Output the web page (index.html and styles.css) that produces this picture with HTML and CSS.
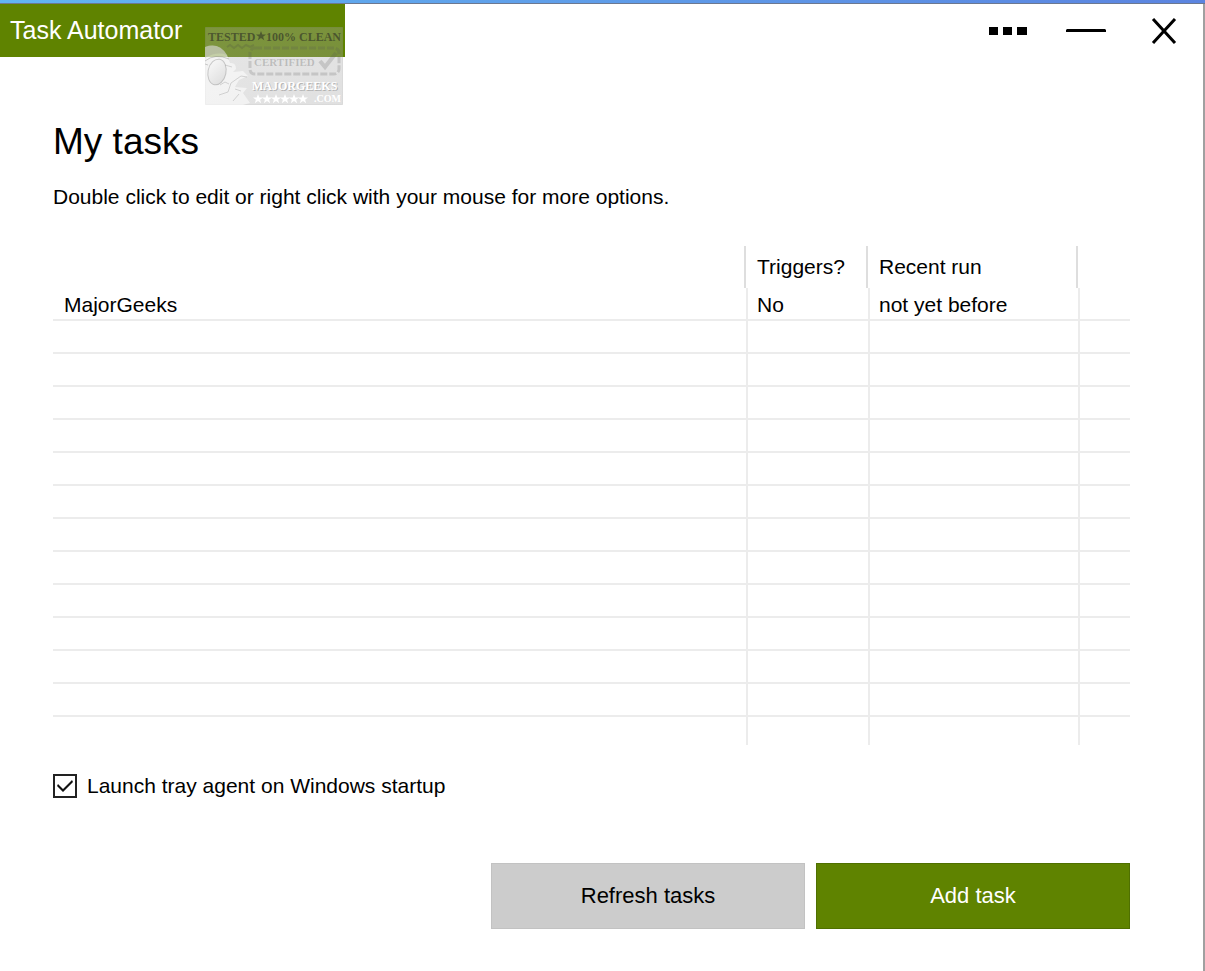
FILE: index.html
```html
<!DOCTYPE html>
<html lang="en">
<head>
  <meta charset="UTF-8" />
  <meta name="viewport" content="width=device-width, initial-scale=1.0"/>
  <title>Task Automator</title>
  <link rel="stylesheet" href="styles.css">
</head>
<body>
  <div class="window">
    <header class="titlebar">
      <div class="app-name">Task Automator
        <svg class="badge" viewBox="0 0 138 78" role="img" aria-label="MajorGeeks certified">
          <defs>
            <linearGradient id="badgeFill" x1="0" y1="0" x2="1" y2="1">
              <stop offset="0" stop-color="#b8b8b8" />
              <stop offset="1" stop-color="#a4a4a4" />
            </linearGradient>
            <linearGradient id="lens" x1="0" y1="0" x2="1" y2="1">
              <stop offset="0" stop-color="#fff" />
              <stop offset="1" stop-color="#ccc" />
            </linearGradient>
            <path id="star" d="M0 -5L1.300 -1.500H5L2.100 0.700L3.200 4.300L0 2.100L-3.200 4.300L-2.100 0.700L-5 -1.500H-1.300Z" />
          </defs>
          <rect x="0.5" y="0.5" width="137" height="77" fill="url(#badgeFill)" fill-opacity="0.34" stroke="#999" stroke-opacity="0.25" />
          <path d="M22 20L25 18L29 21L33 18L37 21L41 18L45 20L49 18" fill="none" stroke="#444" stroke-opacity="0.2" stroke-width="2" />
          <!-- geek: cap, goggles, nose, pointing hand -->
          <path d="M0 20Q14 15 22 28L25 36Q31 35 31 42L28 45L38 44L43 49L34 53L30 60L42 61L38 66L45 76L38 78H0Z" fill="#fff" fill-opacity="0.55" />
          <path d="M0 20Q14 15 22 28Q12 24 0 31Z" fill="#888" fill-opacity="0.22" />
          <path d="M0 34Q10 26 24 32M0 37L3 38" fill="none" stroke="#888" stroke-opacity="0.4" />
          <ellipse cx="12" cy="45" rx="9" ry="13" fill="url(#lens)" fill-opacity="0.6" stroke="#888" stroke-opacity="0.4" transform="rotate(12 12 45)" />
          <path d="M20 38L27 40M15 58L20 55L24 57M14 68L23 65L26 56L36 49L42 50M30 62L36 64M28 74L34 67" fill="none" stroke="#777" stroke-opacity="0.28" />
          <g fill="none" stroke="#555" stroke-opacity="0.2">
            <rect x="45" y="21" width="89" height="26" rx="5" stroke-width="3" stroke-dasharray="7 2" />
            <path d="M115 34L120 40L131 26" stroke-width="4" />
          </g>
          <use href="#star" x="56" y="9" fill="#222" fill-opacity="0.5" />
          <g fill="#fff">
            <use href="#star" x="53" y="72" />
            <use href="#star" x="62" y="72" />
            <use href="#star" x="71" y="72" />
            <use href="#star" x="80" y="72" />
            <use href="#star" x="89" y="72" />
            <use href="#star" x="98" y="72" />
          </g>
          <text class="badge-text" x="3" y="14" font-size="12" fill="#222" fill-opacity="0.55">TESTED</text>
          <text class="badge-text" x="61" y="14" font-size="12" fill="#222" fill-opacity="0.55">100% CLEAN</text>
          <text class="badge-text" x="49" y="39" font-size="11" fill="#444" fill-opacity="0.25">CERTIFIED</text>
          <text class="badge-text" x="48" y="64" font-size="12" fill="#666" fill-opacity="0.4">MAJORGEEKS</text>
          <text class="badge-text" x="47" y="63" font-size="12" fill="#fff">MAJORGEEKS</text>
          <text class="badge-text" x="109" y="75" font-size="10" fill="#fff">.COM</text>
        </svg>
      </div>
      <div class="window-buttons">
        <button type="button" aria-label="More">
          <svg width="38" height="8" viewBox="0 0 38 8"><path d="M0 0h9v8H0zM14 0h9v8h-9zM28 0h10v8H28z" /></svg>
        </button>
        <button type="button" aria-label="Minimize">
          <svg width="40" height="4" viewBox="0 0 40 4"><path d="M1 0h38l1 1v2H0V1z" /></svg>
        </button>
        <button type="button" aria-label="Close">
          <svg width="26" height="26" viewBox="0 0 26 26"><path d="M2 1L24 25M24 1L2 25" fill="none" stroke="#000" stroke-width="3" /></svg>
        </button>
      </div>
    </header>

    <main>
      <h1>My tasks</h1>
      <p>Double click to edit or right click with your mouse for more options.</p>

      <table class="tasks">
        <colgroup>
          <col>
          <col class="col-triggers">
          <col class="col-run">
          <col class="col-rest">
        </colgroup>
        <thead>
          <tr><th></th><th>Triggers?</th><th>Recent run</th><th></th></tr>
        </thead>
        <tbody>
          <tr><td>MajorGeeks</td><td>No</td><td>not yet before</td><td></td></tr>
          <tr><td></td><td></td><td></td><td></td></tr>
          <tr><td></td><td></td><td></td><td></td></tr>
          <tr><td></td><td></td><td></td><td></td></tr>
          <tr><td></td><td></td><td></td><td></td></tr>
          <tr><td></td><td></td><td></td><td></td></tr>
          <tr><td></td><td></td><td></td><td></td></tr>
          <tr><td></td><td></td><td></td><td></td></tr>
          <tr><td></td><td></td><td></td><td></td></tr>
          <tr><td></td><td></td><td></td><td></td></tr>
          <tr><td></td><td></td><td></td><td></td></tr>
          <tr><td></td><td></td><td></td><td></td></tr>
          <tr><td></td><td></td><td></td><td></td></tr>
          <tr><td></td><td></td><td></td><td></td></tr>
        </tbody>
      </table>

      <div class="startup">
        <input type="checkbox" id="startup" checked>
        <label for="startup">Launch tray agent on Windows startup</label>
      </div>

      <div class="actions">
        <button type="button">Refresh tasks</button>
        <button type="button" class="primary">Add task</button>
      </div>
    </main>
  </div>
</body>
</html>
```
FILE: styles.css
```css
* {
  box-sizing: border-box;
}

body {
  margin: 0;
  font-family: "Liberation Sans", Arial, sans-serif;
  font-size: 21px;
  color: #000;
  background: #fff;
}

.window {
  min-height: 100vh;
  border-right: 2px solid #a0a0a0;
}

.window::before {
  content: "";
  display: block;
  height: 3px;
  margin-right: -2px;
  border-bottom: 1px solid #6c7890;
  background: linear-gradient(to right, #62b5f2, #5b84e0);
}

.titlebar {
  display: flex;
  justify-content: space-between;
}

.app-name {
  position: relative;
  width: 345px;
  height: 53px;
  padding-left: 10px;
  background: #5f8300;
  color: #fff;
  font-size: 25px;
  line-height: 52px;
}

/* stamp hangs over the lower edge of the green tab */
.badge {
  position: absolute;
  top: 23px;
  right: 2px;
  width: 138px;
  height: 78px;
}

.badge-text {
  font-family: "Liberation Serif", serif;
  font-weight: bold;
}

.window-buttons {
  display: flex;
}

.window-buttons button {
  display: flex;
  align-items: center;
  justify-content: center;
  width: 78px;
  padding: 0;
  border: none;
  background: none;
}

main {
  padding: 63px 73px 40px 53px;
}

h1 {
  margin: 0 0 19px;
  font-size: 37px;
  font-weight: normal;
  line-height: 44px;
}

p {
  margin: 0 0 35px;
  line-height: 28px;
}

.tasks {
  width: 100%;
  table-layout: fixed;
  border-spacing: 0;
}

.col-triggers {
  width: 122px;
}

.col-run {
  width: 210px;
}

.col-rest {
  width: 52px;
}

.tasks th {
  height: 42px;
  padding: 0 0 0 11px;
  border-right: 2px solid #dedede;
  font-weight: normal;
  text-align: left;
}

.tasks th:last-child {
  border-right: none;
}

.tasks td {
  height: 33px;
  padding: 2px 0 0 9px;
  border-left: 2px solid #ececec;
  border-bottom: 2px solid #ececec;
  line-height: 28px;
}

.tasks td:first-child {
  padding-left: 11px;
  border-left: none;
}

.tasks tr:last-child td {
  height: 28px;
  border-bottom: none;
}

.startup {
  display: flex;
  align-items: center;
  gap: 10px;
  margin-top: 27px;
  line-height: 28px;
}

.startup input {
  appearance: none;
  width: 24px;
  height: 24px;
  margin: 0;
  border: 2px solid #222;
  background: #fff;
}

.startup input:checked::before {
  content: "";
  display: block;
  height: 20px;
  background: #111;
  clip-path: polygon(2px 10px, 3px 8px, 8px 13px, 17px 4px, 18px 6px, 8px 16px);
}

.actions {
  display: flex;
  justify-content: flex-end;
  gap: 11px;
  margin-top: 63px;
}

.actions button {
  width: 314px;
  height: 66px;
  border: 1px solid #c2c2c2;
  background: #ccc;
  color: #000;
  font-family: inherit;
  font-size: 22px;
}

.actions .primary {
  border-color: #4f7000;
  background: #5f8300;
  color: #fff;
}
```
